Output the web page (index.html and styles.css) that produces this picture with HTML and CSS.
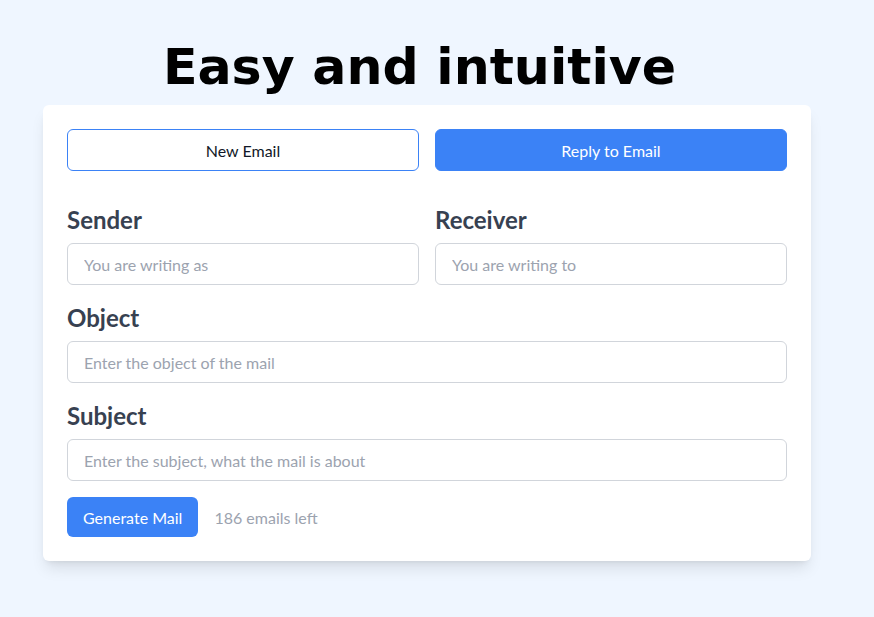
FILE: index.html
```html
<!DOCTYPE html>
<html lang="en">
<head>
<meta charset="utf-8">
<title>Easy and intuitive</title>
<link rel="stylesheet" href="styles.css">
</head>
<body>
<main class="page">
  <h1 class="title">Easy and intuitive</h1>
  <section class="card">
    <div class="tabs">
      <button class="tab tab-outline">New Email</button>
      <button class="tab tab-filled">Reply to Email</button>
    </div>
    <div class="row">
      <div class="field">
        <label class="label">Sender</label>
        <input class="input" type="text" placeholder="You are writing as">
      </div>
      <div class="field">
        <label class="label">Receiver</label>
        <input class="input" type="text" placeholder="You are writing to">
      </div>
    </div>
    <div class="field">
      <label class="label">Object</label>
      <input class="input" type="text" placeholder="Enter the object of the mail">
    </div>
    <div class="field">
      <label class="label">Subject</label>
      <input class="input" type="text" placeholder="Enter the subject, what the mail is about">
    </div>
    <div class="actions">
      <button class="generate">Generate Mail</button>
      <span class="counter">186 emails left</span>
    </div>
  </section>
</main>
</body>
</html>
```

FILE: styles.css
```css
* { box-sizing: border-box; }
html, body { margin: 0; padding: 0; }
body {
  background: #eff6ff;
  font-family: Lato, "Noto Sans", sans-serif;
  min-height: 617px;
}
.page {
  width: 768px;
  margin-left: 43px;
  padding-top: 38px;
}
.title {
  margin: 0 15px 0 0;
  font-family: "DejaVu Sans", sans-serif;
  font-weight: 700;
  font-size: 50.6px;
  line-height: 58px;
  text-align: center;
  color: #000;
  height: 67px;
}
.card {
  background: #fff;
  border-radius: 6px;
  box-shadow: 0 10px 15px -3px rgba(0,0,0,0.1), 0 4px 6px -4px rgba(0,0,0,0.1);
  padding: 24px;
}
.tabs {
  display: grid;
  grid-template-columns: 1fr 1fr;
  gap: 16px;
  margin-bottom: 33px;
}
.tab {
  height: 42px;
  border-radius: 6px;
  font-family: inherit;
  font-size: 16px;
  cursor: pointer;
}
.tab-outline {
  background: #fff;
  border: 1px solid #3b82f6;
  color: #111827;
}
.tab-filled {
  background: #3b82f6;
  border: 1px solid #3b82f6;
  color: #fff;
}
.row {
  display: grid;
  grid-template-columns: 1fr 1fr;
  gap: 16px;
}
.field {
  display: flex;
  flex-direction: column;
  margin-bottom: 17px;
}
.label {
  font-size: 24px;
  line-height: 32px;
  font-weight: 700;
  color: #374151;
  margin-bottom: 7px;
}
.input {
  height: 42px;
  border: 1px solid #d1d5db;
  border-radius: 6px;
  padding: 0 16px;
  font-family: inherit;
  font-size: 16px;
  color: #111827;
  background: #fff;
  outline: none;
}
.input::placeholder { color: #9ca3af; }
.actions {
  display: flex;
  align-items: center;
  gap: 16px;
  margin-top: -1px;
}
.generate {
  height: 40px;
  padding: 0 16px;
  background: #3b82f6;
  color: #fff;
  border: none;
  border-radius: 6px;
  font-family: inherit;
  font-size: 16px;
  cursor: pointer;
}
.counter {
  color: #9ca3af;
  font-size: 16px;
}
```
